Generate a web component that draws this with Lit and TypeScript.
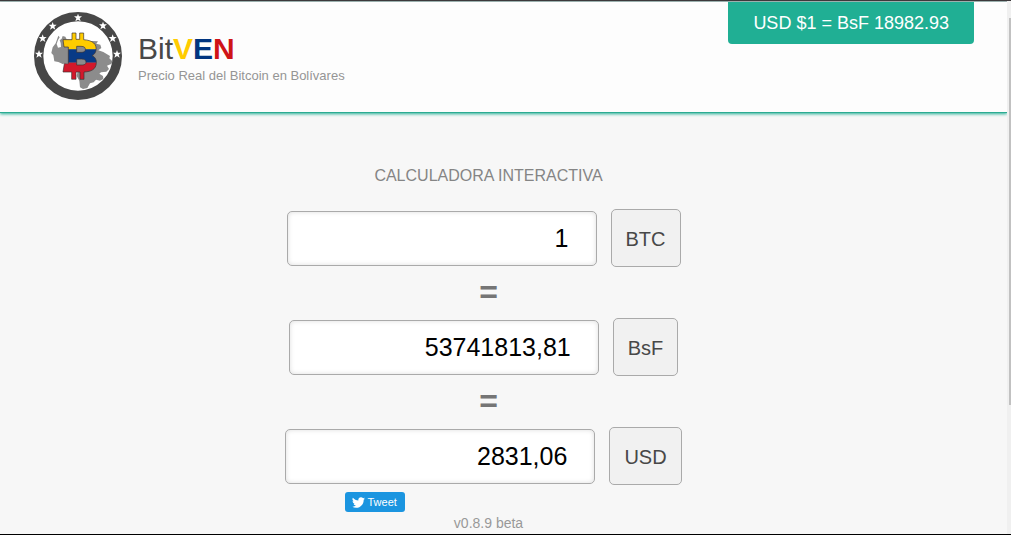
import { LitElement, html, css, svg } from "lit";
import { customElement, state } from "lit/decorators.js";

interface Currency {
  id: string;
  unit: string;
  value: string;
}

const STAR = "M0-12 3-4 12-4 5 2 8 11 0 6-8 11-5 2-12-4-3-4Z";
const STARS = [[150, 38], [74, 63], [225, 62], [44, 100], [254, 100], [33, 147], [267, 147]];
const COIN =
  "M132 84h12v19h11v-19h12v20c28 2 40 14 37 32-1 8-6 13-12 16 10 4 14 12 13 23-2 17-13 25-37 26v22h-12v-22h-12v22h-13v-22h-26l4-25h12v-50h-13l-3-22h27Z" +
  "M146 124v18h13c11 0 13-4 13-9s-3-9-13-9Z" +
  "M146 162v18h14c12 0 14-4 14-9s-4-9-14-9Z";

@customElement("bitven-logo")
export class BitvenLogo extends LitElement {
  static styles = css`
    :host { display: block; }
    svg { display: block; width: 100%; height: 100%; }
  `;

  render() {
    return html`
      <svg viewBox="18 18 264 270" role="img" aria-label="BitVEN">
        <defs>
          <clipPath id="coin"><path clip-rule="evenodd" d=${COIN} /></clipPath>
        </defs>
        <circle cx="150" cy="153" r="118" fill="#fff" stroke="#474747" stroke-width="28" />
        ${STARS.map(([x, y]) => svg`<path d=${STAR} transform="translate(${x} ${y})" fill="#fff" />`)}
        <path fill="#8c8c8c" d="M91 92l4 5-5 8-4 12 4 11 9-2-1-12-3-8 6-5 3-8 8 2 4 8 20 1 25 2 12 6 20-4 17 1-5 7 12 3 3 10-9 7 15 5 20 12-2 7 9 9-2 7-14 6 6 10-8 8-16 2-5 4 11 7 1 9-10 5-12-3-7 8-11 3-8 14-13 3-9-5-2-20-8-14 3-15-3-15-18-3-10-6-14 3-13-6-12-2-3-18-6-7 4-17 9-12Z" />
        <g clip-path="url(#coin)">
          <rect x="95" y="80" width="115" height="53" fill="#fc0" />
          <rect x="95" y="133" width="115" height="40" fill="#083a86" />
          <rect x="95" y="173" width="115" height="55" fill="#d2182b" />
        </g>
        <path d=${COIN} fill="none" stroke="#3a3030" stroke-width="2" />
      </svg>
    `;
  }
}

@customElement("app-root")
export class AppRoot extends LitElement {
  @state() private currencies: Currency[] = [
    { id: "btc", unit: "BTC", value: "1" },
    { id: "bsf", unit: "BsF", value: "53741813,81" },
    { id: "usd", unit: "USD", value: "2831,06" },
  ];

  static styles = css`
    * { box-sizing: border-box; }
    :host {
      display: flex;
      box-sizing: border-box;
      height: 100vh;
      overflow: hidden;
      border-top: 1px solid #3c393b;
      border-bottom: 1px solid #000;
      background: #f7f7f7;
      color: #484848;
      font-family: "Liberation Sans", Arial, sans-serif;
    }
    .page {
      flex: 1;
      min-width: 0;
      border-top: 1px solid #b5b0b4;
    }
    .header {
      display: flex;
      justify-content: space-between;
      align-items: flex-start;
      height: 111px;
      padding: 0 33px 0 34px;
      background: #fdfdfd;
      border-bottom: 1px solid #2bab92;
      box-shadow: 0 1px 3px #20af94;
    }
    .brand {
      display: flex;
      gap: 16px;
      padding-top: 9px;
      color: inherit;
      text-decoration: none;
    }
    .logo { width: 88px; height: 90px; }
    .name {
      margin: 22px 0 0;
      font-size: 30px;
      line-height: 32px;
      font-weight: 400;
    }
    .name b:nth-of-type(1) { color: #fc0; }
    .name b:nth-of-type(2) { color: #003580; }
    .name b:nth-of-type(3) { color: #cf1417; }
    .tagline {
      margin: 0;
      font-size: 13px;
      line-height: 22px;
      color: #959595;
    }
    .rate {
      margin: 0;
      padding: 0 25px;
      border-radius: 0 0 4px 4px;
      background: #20af94;
      color: #fff;
      font-size: 18px;
      line-height: 42px;
    }
    .main {
      display: flex;
      flex-direction: column;
      align-items: center;
      padding: 53px 30px 0 0;
    }
    .title {
      margin: 0 0 23px;
      font-size: 16px;
      line-height: 20px;
      font-weight: 400;
      color: #858585;
    }
    .row {
      display: flex;
      align-items: center;
      gap: 14px;
      margin-right: 10px;
    }
    .amount {
      width: 310px;
      height: 55px;
      padding: 0 27px;
      border: 1px solid #aaa;
      border-radius: 5px;
      background: #fff;
      box-shadow: inset 0 0 5px #ddd;
      color: #000;
      font: inherit;
      font-size: 25px;
      text-align: right;
      outline: none;
    }
    .unit {
      padding: 2px 14px 0;
      border: 1px solid #aaa;
      border-radius: 5px;
      background: #f1f1f1;
      font-size: 20px;
      line-height: 54px;
    }
    .equals {
      font-size: 32px;
      font-weight: 700;
      line-height: 51px;
      color: #757575;
    }
    .share {
      display: flex;
      width: 288px;
      margin-top: 7px;
    }
    .tweet {
      display: flex;
      align-items: center;
      gap: 3px;
      height: 20px;
      padding: 0 8px 0 7px;
      border-radius: 3px;
      background: #1b95e0;
      color: #fff;
      font-size: 11px;
      text-decoration: none;
    }
    .bird { width: 13px; height: 13px; fill: #fff; }
    .version {
      margin: 0;
      font-size: 14px;
      line-height: 22px;
      color: #999;
    }
    .scroll {
      width: 4px;
      padding: 17px 0 0 2px;
      background: #f0f0f0;
    }
    .thumb { height: 75%; background: #c1c1c1; }
  `;

  private setAmount(id: string, event: Event) {
    const value = (event.target as HTMLInputElement).value;
    this.currencies = this.currencies.map((c) => (c.id === id ? { ...c, value } : c));
  }

  render() {
    return html`
      <div class="page">
        <header class="header">
          <a class="brand" href="#">
            <bitven-logo class="logo"></bitven-logo>
            <div>
              <h1 class="name">Bit<b>V</b><b>E</b><b>N</b></h1>
              <p class="tagline">Precio Real del Bitcoin en Bolívares</p>
            </div>
          </a>
          <p class="rate">USD $1 = BsF 18982.93</p>
        </header>
        <main class="main">
          <h2 class="title">CALCULADORA INTERACTIVA</h2>
          ${this.currencies.map(
            (c, i) => html`
              ${i ? html`<div class="equals">=</div>` : ""}
              <div class="row">
                <input class="amount" id=${c.id} type="text" .value=${c.value}
                  @input=${(e: Event) => this.setAmount(c.id, e)} />
                <label class="unit" for=${c.id}>${c.unit}</label>
              </div>
            `,
          )}
          <div class="share">
            <a class="tweet" href="#">
              <svg class="bird" viewBox="0 0 24 24" aria-hidden="true">
                <path d="M23.950 4.570a10 10 0 0 1-2.820.780 4.960 4.960 0 0 0 2.160-2.730c-.950.560-2 .960-3.130 1.190a4.920 4.920 0 0 0-8.380 4.480C7.690 8.100 4.070 6.130 1.640 3.160a4.930 4.930 0 0 0 1.520 6.570 4.900 4.900 0 0 1-2.230-.610v.060a4.920 4.920 0 0 0 3.950 4.830 5 5 0 0 1-2.210.080 4.940 4.940 0 0 0 4.600 3.420A9.870 9.870 0 0 1 0 19.540a14 14 0 0 0 7.550 2.210c9.050 0 14-7.500 14-13.980 0-.210 0-.420-.020-.630a9.940 9.940 0 0 0 2.460-2.550Z" />
              </svg>
              <span>Tweet</span>
            </a>
          </div>
          <p class="version">v0.8.9 beta</p>
        </main>
      </div>
      <div class="scroll" aria-hidden="true"><div class="thumb"></div></div>
    `;
  }
}
